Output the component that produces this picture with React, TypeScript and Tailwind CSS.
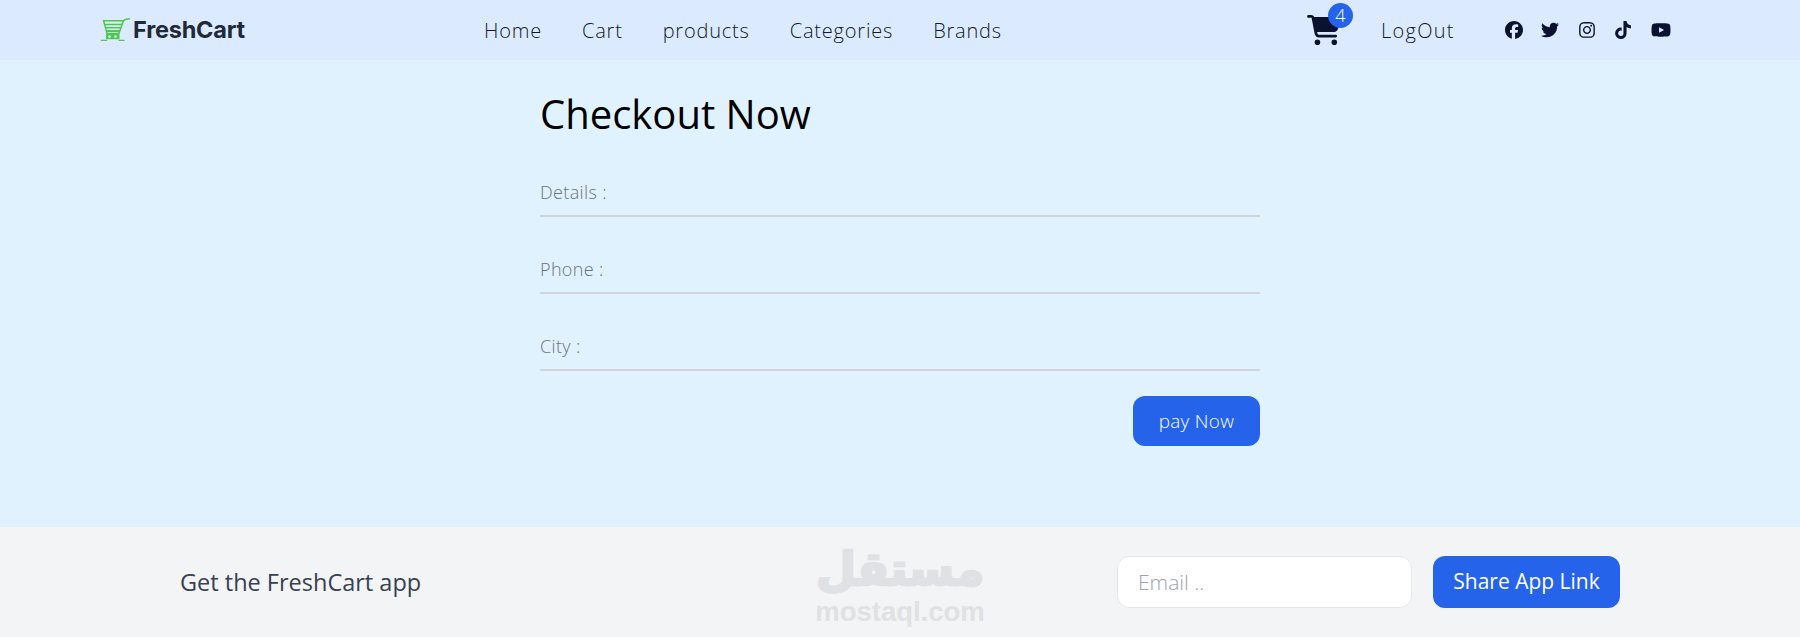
import React from 'react';
import { FaCartShopping, FaFacebook, FaInstagram, FaTiktok, FaTwitter, FaYoutube } from 'react-icons/fa6';

const navLinks = ['Home', 'Cart', 'products', 'Categories', 'Brands'];
const fields = ['Details :', 'Phone :', 'City :'];

const LogoCart = () => (
  <svg width="30" height="24" viewBox="0 0 30 24" fill="none" stroke="#4cc94c" strokeWidth="1.5">
    <path d="M30 0.6 25.5 1.4 23 2.8M3.6 2.8H23.4L19 15.5H7Z" />
    <path d="M4.6 6.5h17.4M5.6 9.8h15.4" />
    <path d="M6.5 13h13.5" strokeWidth="2" />
    <rect x="6" y="16" width="13.5" height="5.2" fill="#4cc94c" stroke="none" />
    <circle cx="9.5" cy="18.6" r="1.3" fill="#dbeafe" stroke="none" />
    <circle cx="15.5" cy="18.6" r="1.3" fill="#dbeafe" stroke="none" />
    <path d="M0.7 22.4h6.5M18.5 22.4h6" strokeWidth="1.1" />
  </svg>
);

export default function App() {
  return (
    <div className="min-h-[637px] flex flex-col font-['Open_Sans',sans-serif] font-light">
      <nav className="h-[60px] bg-[#dbeafe] flex items-center pl-[100px] text-[#111827]">
        <a href="#" className="w-[384px] flex items-center gap-[3px] font-['Inter',sans-serif] text-[23.5px] font-bold text-[#1f2937] tracking-[-0.2px]">
          <LogoCart />
          FreshCart
        </a>
        <ul className="flex items-center gap-[40px] pt-[2px] text-[20px] tracking-[0.8px]">
          {navLinks.map((link) => (
            <li key={link}>{link}</li>
          ))}
        </ul>
        <div className="ml-[305px] relative text-[#0b1130]">
          <FaCartShopping className="w-[34px] h-[30px]" />
          <span className="absolute -top-[12px] left-[21px] w-[25px] h-[25px] rounded-full bg-[#2563eb] text-white text-[18px] flex items-center justify-center">
            4
          </span>
        </div>
        <span className="ml-[40px] pt-[2px] text-[20px] tracking-[1.3px]">LogOut</span>
        <div className="ml-[50px] flex items-center gap-[18.5px] text-[#0b1130] text-[18px]">
          <FaFacebook />
          <FaTwitter />
          <FaInstagram />
          <FaTiktok />
          <FaYoutube className="text-[20px]" />
        </div>
      </nav>

      <main className="h-[467px] bg-[#e0f2fe]">
        <div className="w-[720px] ml-[540px] pt-[24px]">
          <h1 className="text-[40px] leading-[60px] font-normal text-black">Checkout Now</h1>
          <form className="mt-[17px] flex flex-col gap-[21px]">
            {fields.map((field) => (
              <div key={field} className="h-[56px] border-b-2 border-[#d1d5db] flex items-end pb-[11px]">
                <label className="text-[18px] leading-[24px] tracking-[0.35px] text-[#6b7280]">{field}</label>
              </div>
            ))}
            <button type="button" className="self-end mt-[4px] w-[127px] h-[50px] rounded-xl bg-[#2563eb] text-white text-[19px] tracking-[0.3px]">
              pay Now
            </button>
          </form>
        </div>
      </main>

      <footer className="relative h-[110px] bg-[#f3f4f6] flex items-center pl-[180px]">
        <span className="w-[937px] pt-[2px] text-[23.5px] text-[#374151] font-normal">Get the FreshCart app</span>
        <input
          placeholder="Email .."
          className="w-[295px] h-[52px] rounded-xl bg-white border border-[#e5e7eb] px-[20px] text-[21px] placeholder:text-[#9ca3af] outline-none"
        />
        <button type="button" className="ml-[21px] w-[187px] h-[52px] rounded-xl bg-[#2563eb] text-white text-[21px] font-normal">
          Share App Link
        </button>
        <div className="absolute left-[815px] top-[16px] w-[170px] flex flex-col items-center text-[#dfe1e4] font-bold select-none">
          <span className="font-['DejaVu_Sans',sans-serif] text-[46px] leading-[52px] [-webkit-text-stroke:2.5px_#dfe1e4]">مستقل</span>
          <span className="mt-[5px] font-['Liberation_Sans',sans-serif] text-[27.5px] leading-[24px]">mostaql.com</span>
        </div>
      </footer>
    </div>
  );
}
